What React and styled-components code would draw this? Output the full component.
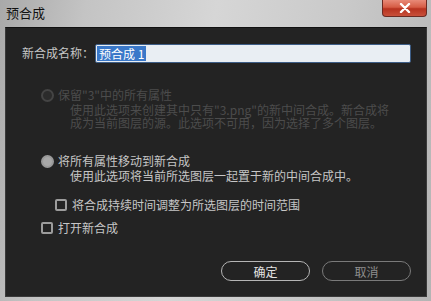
import React, { useState } from "react";
import styled, { createGlobalStyle } from "styled-components";

const Global = createGlobalStyle`
  html, body { margin: 0; padding: 0; }
  body {
    width: 431px;
    height: 301px;
    overflow: hidden;
    font-family: "Noto Sans CJK SC", "Liberation Sans", sans-serif;
  }
`;

export default function App() {
  const [mode, setMode] = useState("move");
  const [fitTime, setFitTime] = useState(false);
  const [openNew, setOpenNew] = useState(false);

  return (
    <Window>
      <Global />
      <TitleBar>
        <Title>预合成</Title>
        <CloseButton aria-label="close">
          <svg width="12" height="10" viewBox="0 0 12 10">
            <path d="M2 1 L10 9 M10 1 L2 9" stroke="#fff" strokeWidth="2.4" strokeLinecap="round" />
          </svg>
        </CloseButton>
      </TitleBar>

      <Panel>
        <NameRow>
          <Label>新合成名称：</Label>
          <NameInput>
            <Selected>预合成 1</Selected>
          </NameInput>
        </NameRow>

        <Options>
          <Option $disabled>
            <OptionLine>
              <Radio $disabled />
              <span>保留"3"中的所有属性</span>
            </OptionLine>
            <Desc $lh={13}>
              <div>使用此选项来创建其中只有"3.png"的新中间合成。新合成将</div>
              <div>成为当前图层的源。此选项不可用，因为选择了多个图层。</div>
            </Desc>
          </Option>

          <Option $top={25}>
            <OptionLine onClick={() => setMode("move")}>
              <Radio $checked={mode === "move"} />
              <span>将所有属性移动到新合成</span>
            </OptionLine>
            <Desc $lh={14}>使用此选项将当前所选图层一起置于新的中间合成中。</Desc>
          </Option>

          <CheckRow $indent={14} $top={15} onClick={() => setFitTime(!fitTime)}>
            <Box $checked={fitTime} />
            <span>将合成持续时间调整为所选图层的时间范围</span>
          </CheckRow>

          <CheckRow $indent={0} $top={9} onClick={() => setOpenNew(!openNew)}>
            <Box $checked={openNew} />
            <span>打开新合成</span>
          </CheckRow>
        </Options>

        <ButtonRow>
          <PillButton>确定</PillButton>
          <PillButton $muted>取消</PillButton>
        </ButtonRow>
      </Panel>
    </Window>
  );
}

const Window = styled.div`
  width: 431px;
  height: 301px;
  box-sizing: border-box;
  padding: 0 4px 4px 5px;
  display: flex;
  flex-direction: column;
  background: linear-gradient(100deg, #a9a9a9 0%, #c4c4c4 18%, #d6d6d6 45%, #c9c9c9 72%, #b4b4b4 100%);
`;

const TitleBar = styled.div`
  height: 27px;
  display: flex;
  justify-content: space-between;
  align-items: flex-start;
`;

const Title = styled.div`
  font-size: 13px;
  line-height: 14px;
  color: #111;
  margin-top: 6px;
  margin-left: 1px;
`;

const CloseButton = styled.div`
  width: 45px;
  height: 17px;
  box-sizing: border-box;
  display: flex;
  align-items: center;
  justify-content: center;
  border: 1px solid #6b2a22;
  border-top: none;
  border-radius: 0 0 4px 4px;
  background: linear-gradient(#e88a78 0%, #d65c45 45%, #b7321f 55%, #c8503a 100%);
`;

const Panel = styled.div`
  flex: 1;
  box-sizing: border-box;
  background: #232323;
  border: 1px solid #3a3a3a;
  border-top-color: #111;
  padding: 15px 15px 15px 16px;
  display: flex;
  flex-direction: column;
  color: #c6c6c6;
  font-size: 12px;
`;

const NameRow = styled.div`
  display: flex;
  align-items: center;
  height: 20px;
`;

const Label = styled.div`
  width: 73px;
  line-height: 14px;
`;

const NameInput = styled.div`
  flex: 1;
  height: 19px;
  box-sizing: border-box;
  background: #e9eef3;
  border: 1px solid #3d5d86;
  border-radius: 2px;
  display: flex;
  align-items: center;
  padding-left: 1px;
  color: #111;
`;

const Selected = styled.span`
  background: #3a78c9;
  color: #fff;
  line-height: 15px;
  padding: 0 2px;
`;

const Options = styled.div`
  padding-left: 19px;
  margin-top: 25px;
  display: flex;
  flex-direction: column;
`;

const Option = styled.div`
  margin-top: ${(p) => p.$top || 0}px;
  color: ${(p) => (p.$disabled ? "#4c4c4c" : "#c6c6c6")};
`;

const OptionLine = styled.div`
  display: flex;
  align-items: center;
  gap: 4px;
  line-height: 14px;
`;

const Radio = styled.span`
  width: 13px;
  height: 13px;
  box-sizing: border-box;
  border-radius: 50%;
  border: 2px solid ${(p) => (p.$disabled ? "#444" : "#9a9a9a")};
  background: ${(p) => (p.$checked ? "#a8a8a8" : p.$disabled ? "#2b2b2b" : "transparent")};
`;

const Desc = styled.div`
  margin-top: 1px;
  padding-left: 29px;
  line-height: ${(p) => p.$lh}px;
`;

const CheckRow = styled.div`
  display: flex;
  align-items: center;
  gap: 5px;
  line-height: 14px;
  margin-top: ${(p) => p.$top}px;
  padding-left: ${(p) => p.$indent}px;
`;

const Box = styled.span`
  width: 12px;
  height: 12px;
  box-sizing: border-box;
  border: 2px solid #9c9c9c;
  border-radius: 2px;
  background: ${(p) => (p.$checked ? "#9c9c9c" : "transparent")};
`;

const ButtonRow = styled.div`
  margin-top: auto;
  display: flex;
  justify-content: flex-end;
  gap: 12px;
`;

const PillButton = styled.div`
  width: 89px;
  height: 20px;
  box-sizing: border-box;
  border: 1.5px solid ${(p) => (p.$muted ? "#7a7a7a" : "#b5b5b5")};
  border-radius: 10px;
  display: flex;
  align-items: center;
  justify-content: center;
  color: ${(p) => (p.$muted ? "#8e8e8e" : "#e2e2e2")};
  font-size: 12px;
`;
